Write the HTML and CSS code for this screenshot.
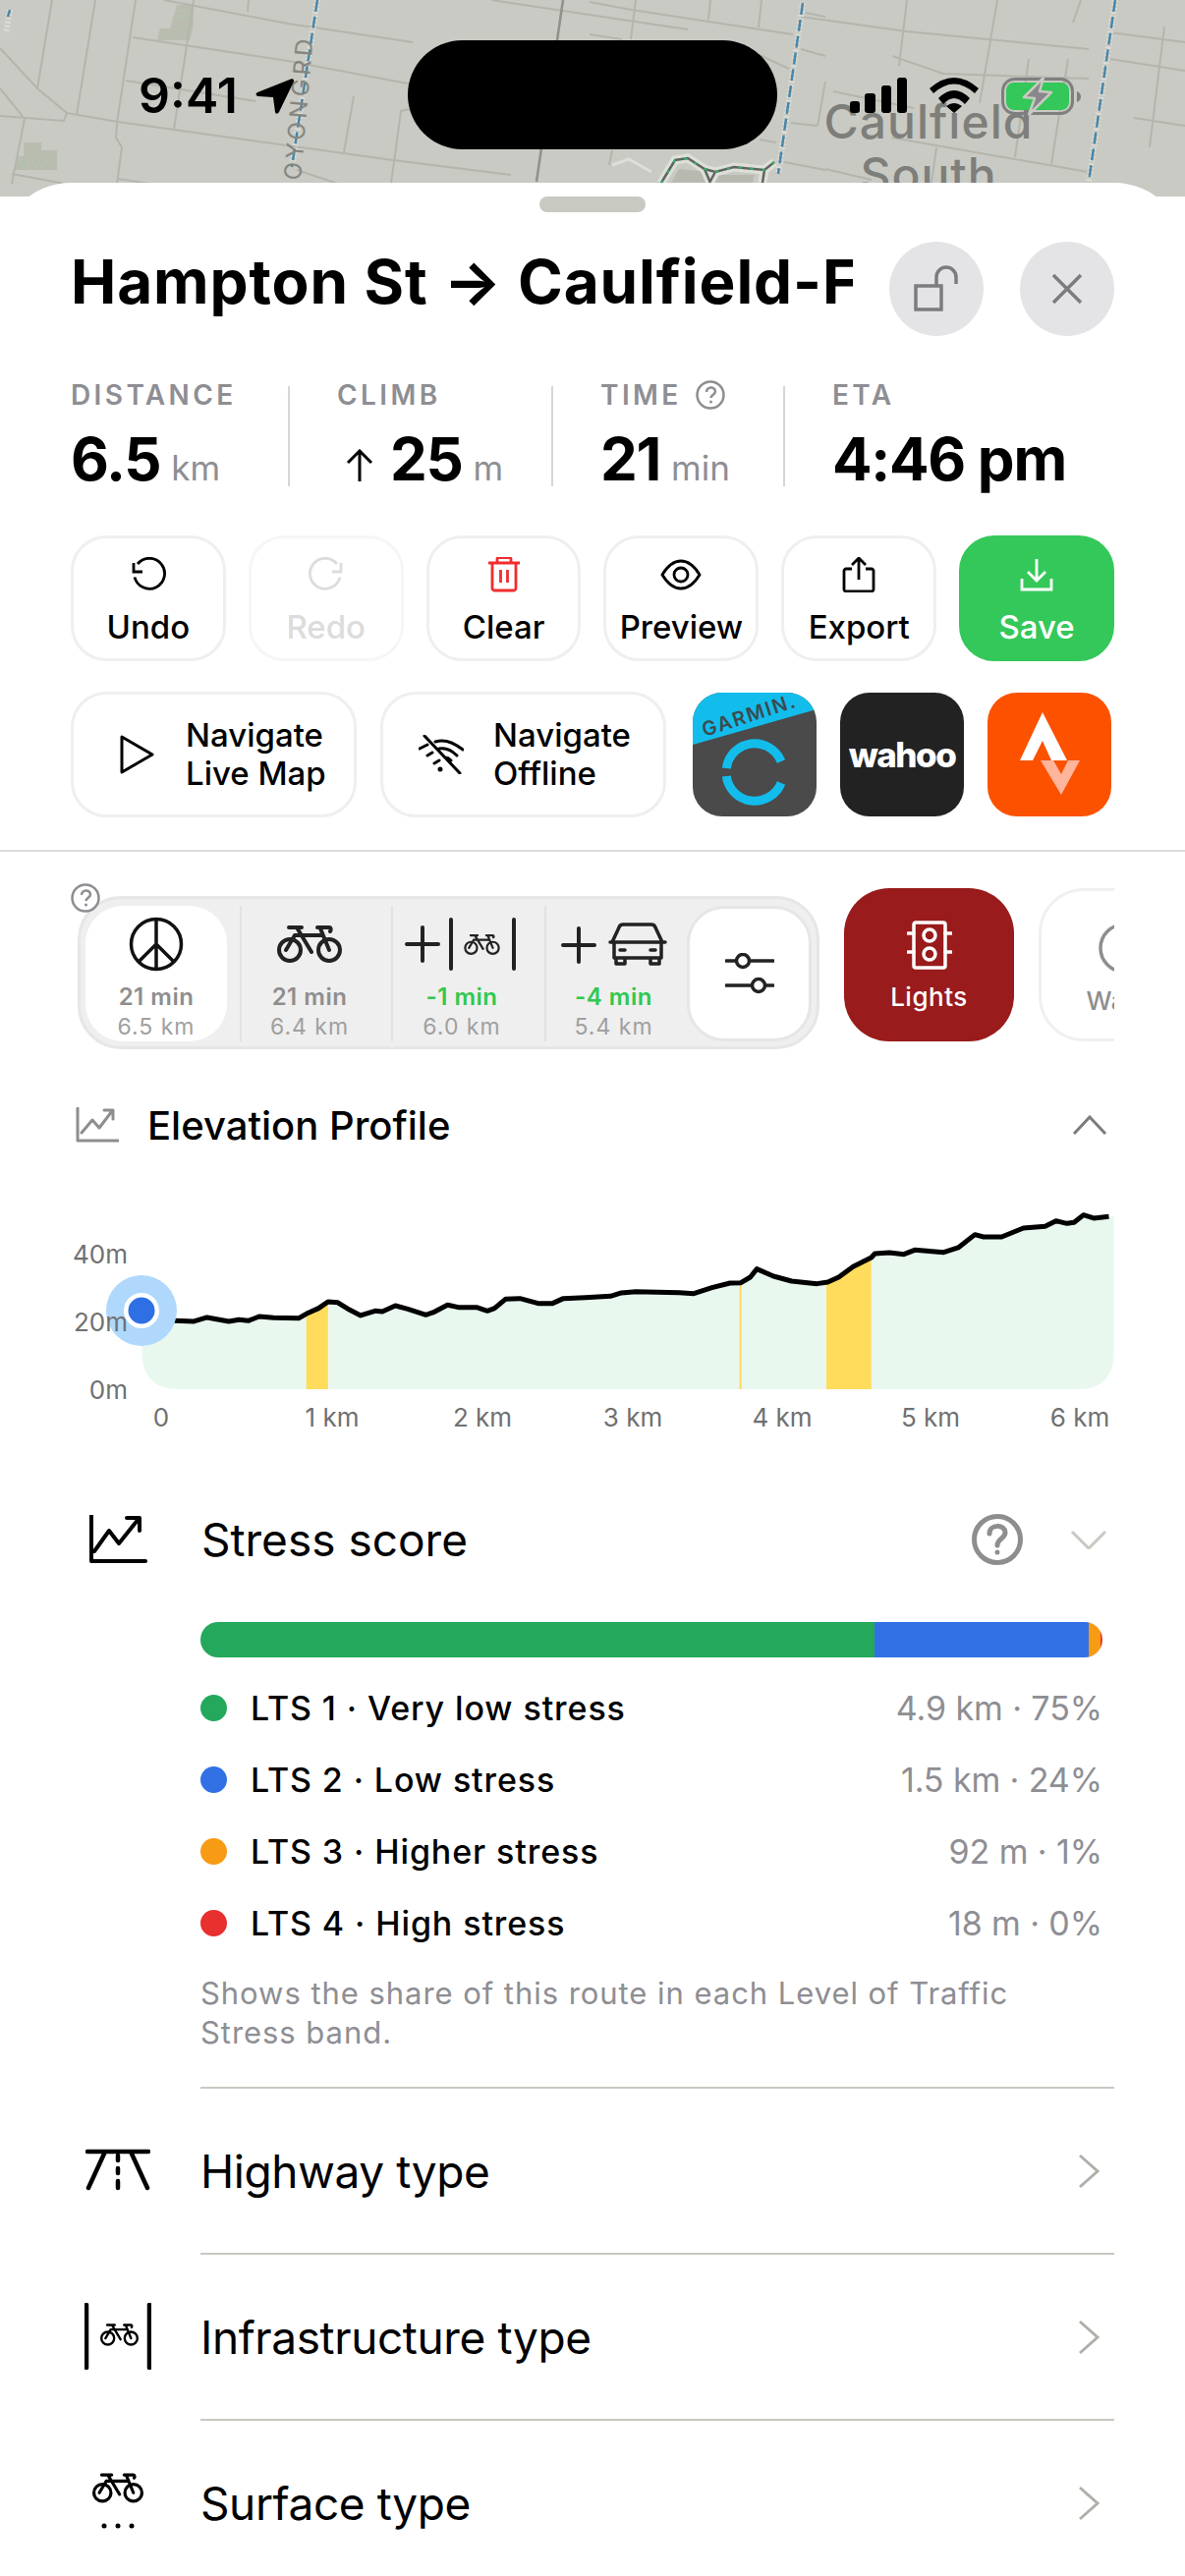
FILE: index.html

```html
<!DOCTYPE html>
<html lang="en">
<head>
  <meta charset="UTF-8" />
  <meta name="viewport" content="width=device-width, initial-scale=1.0" />
  <title>Route planner</title>
  <link rel="stylesheet" href="styles.css">
</head>
<body>
  <svg width="0" height="0" class="defs">
    <symbol id="bike" viewBox="0 0 66 38">
      <g fill="none" stroke="currentColor" stroke-width="4" stroke-linecap="round" stroke-linejoin="round">
        <circle cx="13" cy="25" r="11" />
        <circle cx="53" cy="25" r="11" />
        <path d="M12 2h13M20 2l15 25M18 10h27M9 25l9-15M41 2h12c2 0 2 3 1 4M44 3l9 22" />
      </g>
    </symbol>
  </svg>

  <div class="map">
    <svg viewBox="0 0 1206 200" width="1206" height="200">
      <rect width="1206" height="200" fill="#c9cac3" />
      <path class="patch" d="M180 5h17v20l-4 16h-33l3-12h10zM24 145h18v8h16v20H14l3-14h7z" />
      <path class="patch-dots" d="M182 10v12M187 10v12M20 165h30M22 170h26" />
      <g class="street">
        <path d="M167 0L293 24L420 43M500 0L700 30" />
        <path d="M97 0L78 117M53 0L38 90M138 0L119 125L118 140L124 150L119 187M197 0L177 132M253 0L252 12" />
        <path d="M0 49L38 90L68 115M0 90L25 121M0 118L65 123L68 115M25 121L12 187" />
        <path d="M68 115L120 124L177 132L400 163L520 178M135 38L293 62L420 86L500 100" />
        <path d="M128 82L260 103M360 98L350 155M420 110L408 113L398 187M12 177L83 190M120 182L173 190M302 173L353 190" />
        <path d="M600 2L643 10L807 35M647 0L642 40M723 0L721 20M775 0L772 28M600 35L633 40" />
        <path d="M743 42L803 70M820 13L840 17M815 50L840 57M840 83L832 128M805 125L832 128M798 165L840 173M773 142L790 145M623 153L620 168" />
        <path d="M815 17L923 32L1108 50M1130 33L1206 43M908 57L960 75L1108 80M1130 60L1206 72M1154 120L1206 128" />
        <path d="M923 0L915 67M1015 0L997 105M1100 0L1092 23M1185 27L1170 150M1047 60L1033 160M1087 60L1070 167" />
        <path d="M848 93L930 110M907 140L1107 175M953 150L948 186M840 172L887 183" />
      </g>
      <path class="road-dark" d="M573 0L546 185" />
      <path class="park-pale" d="M623 168L640 162L663 175" />
      <path class="park-patch" d="M683 186l8-14 22 2 8 12zM728 186l4-8 36 0-2 8z" />
      <path class="park" d="M673 186L687 163L700 161L717 172L728 175L747 170L778 173L788 165M717 172L723 186M728 175L722 186M778 173L776 186" />
      <path class="park-line" d="M673 186L687 163L700 161L717 172L728 175L747 170L778 173L788 165M717 172L723 186M728 175L722 186M778 173L776 186" />
      <path class="park-green" d="M673 186L687 163L700 161L717 172L728 175L747 170L778 173L788 165" />
      <path class="road-halo" d="M817 3L792 177M1135 0L1108 185M323 0L297 170M10 10L6 34" />
      <path class="road-blue" d="M817 3L792 177M1135 0L1108 185M323 0L297 170M10 10L8 17" />
    </svg>
    <span class="road-name">OYONGRD</span>
    <span class="suburb">Caulfield<br>South</span>
  </div>

  <div class="statusbar">
    <span class="clock">9:41</span>
    <svg class="locate" viewBox="0 0 40 38" width="40" height="38"><path d="M36 2.500c2-1 3.500.5 3 2.500L24 36c-1.500 2.500-3.500 2-4 0l-2-15L3 20c-3-.5-3-3-1-4z" /></svg>
    <div class="island"></div>
    <div class="status-icons">
      <svg viewBox="0 0 58 36" width="58" height="36"><rect x="0" y="24" width="10" height="12" rx="3" /><rect x="15" y="16" width="11" height="20" rx="3" /><rect x="32" y="8" width="10" height="28" rx="3" /><rect x="48" y="0" width="10" height="36" rx="3" /></svg>
      <svg viewBox="0 0 50 36" width="50" height="36"><path d="M0 11Q25-11 50 11L46 16Q25-3 4 16ZM9 21Q25 5 41 21L36 27Q25 15 14 27ZM17 29Q25 23 33 29L25 36Z" /></svg>
      <svg viewBox="0 0 82 38" width="82" height="38">
        <rect x="1.500" y="1.500" width="71" height="35" rx="12" fill="none" stroke="#7f7f7f" stroke-width="3" />
        <rect x="5" y="5" width="64" height="28" rx="8" fill="#34c759" />
        <path d="M77 14c3 1 4 3 4 5.500s-1 4.500-4 5.500z" fill="#7f7f7f" />
        <path d="M43 0L23 20l11 1L28 38 51 15 39 14z" fill="#88888c" stroke="#c9cac3" stroke-width="2.500" stroke-linejoin="round" />
      </svg>
    </div>
  </div>

  <main class="sheet">
    <div class="handle"></div>

    <header class="sheet-head">
      <h1 class="route-title">Hampton St → Caulfield-F</h1>
      <button class="round-btn">
        <svg viewBox="0 0 48 48" width="48" height="48"><path d="M3 21h26v24H3zM24 21v-9a10 10 0 0 1 20 0v7" /></svg>
      </button>
      <button class="round-btn">
        <svg viewBox="0 0 32 32" width="32" height="32"><path d="M2 2l28 28M30 2L2 30" /></svg>
      </button>
    </header>

    <section class="stats">
      <div class="stat stat-distance">
        <div class="stat-label">DISTANCE</div>
        <div class="stat-value"><span>6.5</span><small>km</small></div>
      </div>
      <div class="stat stat-climb">
        <div class="stat-label">CLIMB</div>
        <div class="stat-value">
          <svg class="climb-arrow" viewBox="0 0 28 34" width="28" height="34"><path d="M14 33V2M2 14L14 2l12 12" /></svg>
          <span>25</span><small>m</small>
        </div>
      </div>
      <div class="stat stat-time">
        <div class="stat-label">TIME
          <svg class="help-small" viewBox="0 0 30 30" width="30" height="30"><circle cx="15" cy="15" r="13.500" /><path d="M11 12c0-6 9-6 9-.5 0 3-4.500 3.500-4.500 6.500" /><circle class="help-dot" cx="15.500" cy="22" r="1.500" /></svg>
        </div>
        <div class="stat-value"><span>21</span><small>min</small></div>
      </div>
      <div class="stat stat-eta">
        <div class="stat-label">ETA</div>
        <div class="stat-value"><span>4:46 pm</span></div>
      </div>
    </section>

    <section class="actions">
      <button class="action">
        <svg viewBox="0 0 36 36" width="36" height="36"><path d="M7 7a15.500 15.500 0 1 1-3 13.500M3 6v9h9" /></svg>
        Undo
      </button>
      <button class="action action-off">
        <svg viewBox="0 0 36 36" width="36" height="36"><path d="M29 7a15.500 15.500 0 1 0 3 13.500M33 6v9h-9" /></svg>
        Redo
      </button>
      <button class="action">
        <svg class="icon-red" viewBox="0 0 36 36" width="36" height="36"><path d="M2 6h32M6 6v26c0 1 1 2 2 2h20c1 0 2-1 2-2V6M11 6V2c0-1 1-1.500 2-1.500h10c1 0 2 .5 2 1.500v4M14.500 13v13M21.500 13v13" /></svg>
        Clear
      </button>
      <button class="action">
        <svg viewBox="0 2 42 36" width="42" height="36"><path d="M2 20C8 10 14 6 21 6s13 4 19 14c-6 10-12 14-19 14S8 30 2 20z" /><circle cx="21" cy="20" r="7" /></svg>
        Preview
      </button>
      <button class="action">
        <svg viewBox="0 0 36 36" width="36" height="36"><path d="M11 12H5c-1 0-2 1-2 2v19c0 1 1 2 2 2h26c1 0 2-1 2-2V14c0-1-1-2-2-2h-6M18 23V1M11 8l7-7 7 7" /></svg>
        Export
      </button>
      <button class="action action-save">
        <svg viewBox="0 0 36 36" width="36" height="36"><path d="M18 2v22M9 15l9 9 9-9M3 22v11h30V22" /></svg>
        Save
      </button>
    </section>

    <section class="nav-row">
      <button class="nav-btn">
        <svg viewBox="0 0 36 42" width="36" height="42"><path d="M3 3v36l31-18z" /></svg>
        <span>Navigate<br>Live Map</span>
      </button>
      <button class="nav-btn nav-offline">
        <svg viewBox="0 0 46 40" width="46" height="40"><path d="M6 1l36 38M1 14l8-4M17 7c9-3 18 0 28 8M9 21l5-3M21 14c6-1 12 1 18 7M16 29l5-3M27 23c2 0 4 1 6 3" /><circle class="dot" cx="22" cy="35" r="2.500" /></svg>
        <span>Navigate<br>Offline</span>
      </button>
      <div class="app-icon app-garmin">
        <svg viewBox="0 0 126 126" width="126" height="126">
          <path d="M0 0h126v17L0 53z" fill="#12bdec" />
          <text x="12" y="45" transform="rotate(-18 12 45)" class="garmin-name">GARMIN.</text>
          <path class="garmin-ring" d="M34.300 77A29 29 0 0 1 90 70" />
          <path class="garmin-ring" d="M34.300 85A29 29 0 0 0 90 92" />
        </svg>
      </div>
      <div class="app-icon app-wahoo"><span>wahoo</span></div>
      <div class="app-icon app-strava">
        <svg viewBox="0 0 126 126" width="126" height="126">
          <path d="M56 20L33 69h13l10-20 9 20h16z" fill="#fff" />
          <path d="M54 69h13l8 14 7-14h12l-19 35z" fill="#ffb49c" />
        </svg>
      </div>
    </section>

    <hr class="rule">

    <section class="tray">
      <div class="mode-group">
        <svg class="help-tiny" viewBox="0 0 30 30" width="30" height="30"><circle cx="15" cy="15" r="13.500" /><path d="M11 12c0-6 9-6 9-.5 0 3-4.500 3.500-4.500 6.500" /><circle class="help-dot" cx="15.500" cy="22" r="1.500" /></svg>
        <div class="mode mode-on">
          <svg class="mode-icon" viewBox="0 0 56 56" width="56" height="56"><g class="peace"><circle cx="28" cy="28" r="25.500" /><path d="M28 2.500v51M28 28L10 46M28 28l18 18" /></g></svg>
          <b>21 min</b>
          <span>6.5 km</span>
        </div>
        <div class="mode mode-second">
          <svg class="mode-icon" viewBox="0 0 66 38" width="66" height="38"><use href="#bike" /></svg>
          <b>21 min</b>
          <span>6.4 km</span>
        </div>
        <div class="mode">
          <svg class="mode-icon" viewBox="0 0 116 54" width="116" height="54">
            <path class="glyph" d="M2 27h32M18 10v34M47 2v50M111 2v50" />
            <use href="#bike" x="60" y="17" width="37" height="21" />
          </svg>
          <b class="faster">-1 min</b>
          <span>6.0 km</span>
        </div>
        <div class="mode mode-last">
          <svg class="mode-icon" viewBox="0 0 108 44" width="108" height="44">
            <path class="glyph" d="M2 23h32M18 6v34" />
            <path class="glyph-thin" d="M52 20l7-15c.5-1.500 2-3 4-3h29c2 0 3.500 1.500 4 3l7 15M50 20h56M54 20v16h48V20M56 36v6h9v-6M91 36v6h9v-6M60 28h5M91 28h5" />
          </svg>
          <b class="faster">-4 min</b>
          <span>5.4 km</span>
        </div>
        <div class="filter-btn">
          <svg viewBox="0 0 50 42" width="50" height="42"><path d="M1 8h10M26 8h23M1 33h26M42 33h7" /><circle cx="18" cy="8" r="6.500" /><circle cx="34" cy="33" r="6.500" /></svg>
        </div>
      </div>
      <div class="chip chip-lights">
        <svg viewBox="0 0 46 50" width="46" height="50"><rect x="7" y="2" width="32" height="46" rx="2" /><circle cx="23" cy="15" r="6" /><circle cx="23" cy="34" r="6" /><path d="M1 13h6M39 13h6M1 32h6M39 32h6" /></svg>
        <span>Lights</span>
      </div>
      <div class="chip chip-water">
        <svg viewBox="0 0 52 52" width="52" height="52"><circle cx="26" cy="26" r="24" /></svg>
        <span>Water</span>
      </div>
    </section>

    <div class="section-head elevation-head">
      <svg class="section-icon" viewBox="0 0 44 36" width="44" height="36"><path d="M2 1v33h41M6 26l11-13 7 8 13-17M29 3h9v9" /></svg>
      <h2>Elevation Profile</h2>
      <svg class="chev" viewBox="0 0 36 20" width="36" height="20"><path d="M2 19L18 2l16 17" /></svg>
    </div>

    <svg class="chart" viewBox="0 1175 1206 295" width="1206" height="295">
      <g transform="translate(50 1100) scale(.7372 .3333)">
        <path class="chart-fill" d="M128 700L150 715L165 732L200 735L218 723L248 735L262 730L275 733L290 720L310 724L345 725L355 712L372 695L385 675L398 677L415 700L430 717L450 703L460 705L478 687L495 697L520 715L530 708L550 685L565 692L590 692L605 703L615 695L630 667L650 665L675 680L695 680L710 665L740 662L775 658L790 648L810 644L870 647L890 650L915 632L940 618L955 617L968 600L977 575L1000 597L1025 612L1060 620L1075 615L1090 600L1110 568L1135 540L1140 528L1160 525L1180 530L1195 517L1235 524L1255 510L1278 470L1290 477L1315 477L1345 450L1375 445L1390 428L1405 436L1415 433L1428 410L1442 420L1463 415L1470 415L1470 830Q1470 942 1420 942L180 942Q128 942 128 830Z" />
        <path class="chart-steep" d="M355 712L372 695L385 675L385 942L355 942ZM953 617L956 617L956 942L953 942ZM1073 616L1090 600L1110 568L1135 540L1135 942L1073 942Z" />
        <path class="chart-line" d="M150 715L165 732L200 735L218 723L248 735L262 730L275 733L290 720L310 724L345 725L355 712L372 695L385 675L398 677L415 700L430 717L450 703L460 705L478 687L495 697L520 715L530 708L550 685L565 692L590 692L605 703L615 695L630 667L650 665L675 680L695 680L710 665L740 662L775 658L790 648L810 644L870 647L890 650L915 632L940 618L955 617L968 600L977 575L1000 597L1025 612L1060 620L1075 615L1090 600L1110 568L1135 540L1140 528L1160 525L1180 530L1195 517L1235 524L1255 510L1278 470L1290 477L1315 477L1345 450L1375 445L1390 428L1405 436L1415 433L1428 410L1442 420L1463 415" />
      </g>
      <circle cx="144" cy="1334" r="36" fill="#afd8fc" />
      <g class="axis">
        <text x="130" y="1286" text-anchor="end">40m</text>
        <text x="130" y="1355" text-anchor="end">20m</text>
        <text x="130" y="1424" text-anchor="end">0m</text>
        <text x="164" y="1452" text-anchor="middle">0</text>
        <text x="338" y="1452" text-anchor="middle">1 km</text>
        <text x="491" y="1452" text-anchor="middle">2 km</text>
        <text x="644" y="1452" text-anchor="middle">3 km</text>
        <text x="796" y="1452" text-anchor="middle">4 km</text>
        <text x="947" y="1452" text-anchor="middle">5 km</text>
        <text x="1099" y="1452" text-anchor="middle">6 km</text>
      </g>
      <circle cx="144" cy="1334" r="18" fill="#fff" />
      <circle cx="144" cy="1334" r="13.500" fill="#2f6fe4" />
    </svg>

    <div class="section-head stress-head">
      <svg class="section-icon" viewBox="0 0 60 50" width="60" height="50"><path d="M3 1v46h55M6 37l15-21 10 13 20-25M39 3h13v13" /></svg>
      <h2>Stress score</h2>
      <svg class="help-big" viewBox="0 0 52 52" width="52" height="52"><circle cx="26" cy="26" r="23.500" /><path d="M18 20c0-10 16-10 16-1 0 6-8 6-8 13" /><circle class="help-dot" cx="26" cy="39" r="2.500" /></svg>
      <svg class="chev chev-light" viewBox="0 0 38 20" width="38" height="20"><path d="M2 2l17 17L36 2" /></svg>
    </div>

    <div class="stress-bar">
      <i class="band-1"></i><i class="band-2"></i><i class="band-3"></i><i class="band-4"></i>
    </div>

    <ul class="legend">
      <li><i class="band-1"></i><b>LTS 1 · Very low stress</b><span>4.9 km · 75%</span></li>
      <li><i class="band-2"></i><b>LTS 2 · Low stress</b><span>1.5 km · 24%</span></li>
      <li><i class="band-3"></i><b>LTS 3 · Higher stress</b><span>92 m · 1%</span></li>
      <li><i class="band-4"></i><b>LTS 4 · High stress</b><span>18 m · 0%</span></li>
    </ul>
    <p class="stress-note">Shows the share of this route in each Level of Traffic Stress band.</p>

    <div class="detail-row">
      <div class="detail-icon">
        <svg viewBox="0 0 66 44" width="66" height="44"><path d="M2 3h62M20 3L3 40M46 3l17 37M33 7v5M33 20v5M33 33v7" /></svg>
      </div>
      <div class="detail-body">
        <span>Highway type</span>
        <svg class="detail-chev" viewBox="0 0 24 36" width="24" height="36"><path d="M3 2l18 16L3 34" /></svg>
      </div>
    </div>
    <div class="detail-row">
      <div class="detail-icon">
        <svg viewBox="0 0 68 68" width="68" height="68"><path d="M2 2v64M66 2v64" /><use href="#bike" x="16" y="21" width="39" height="23" /></svg>
      </div>
      <div class="detail-body">
        <span>Infrastructure type</span>
        <svg class="detail-chev" viewBox="0 0 24 36" width="24" height="36"><path d="M3 2l18 16L3 34" /></svg>
      </div>
    </div>
    <div class="detail-row">
      <div class="detail-icon">
        <svg viewBox="0 0 54 60" width="54" height="60"><use href="#bike" x="1" y="0" width="52" height="31" /><circle class="dot" cx="13" cy="54" r="2.500" /><circle class="dot" cx="27" cy="54" r="2.500" /><circle class="dot" cx="41" cy="54" r="2.500" /></svg>
      </div>
      <div class="detail-body">
        <span>Surface type</span>
        <svg class="detail-chev" viewBox="0 0 24 36" width="24" height="36"><path d="M3 2l18 16L3 34" /></svg>
      </div>
    </div>
  </main>
</body>
</html>
```

FILE: styles.css

```css
* {
  box-sizing: border-box;
}
html, body {
  margin: 0;
  width: 1206px;
  height: 2622px;
  overflow: hidden;
}
body {
  position: relative;
  font-family: Inter, "Noto Sans", sans-serif;
  color: #000;
  background: #fff;
}
button {
  font-family: inherit;
  color: inherit;
  background: none;
  border: none;
  padding: 0;
}
.defs {
  position: absolute;
}

/* map behind the sheet */
.map {
  position: absolute;
  top: 0;
  left: 0;
  width: 1206px;
  height: 200px;
  overflow: hidden;
}
.map svg {
  display: block;
}
.patch {
  fill: #b9bdb0;
}
.patch-dots {
  fill: none;
  stroke: #9fd3b0;
  stroke-width: 1.500;
  stroke-dasharray: 1.500 5;
}
.street path {
  fill: none;
  stroke: #b4b5ad;
  stroke-width: 2;
}
.road-dark {
  fill: none;
  stroke: #8f918a;
  stroke-width: 2.500;
}
.road-halo {
  fill: none;
  stroke: #dcdcd6;
  stroke-width: 6;
  stroke-dasharray: 2 2;
}
.road-blue {
  fill: none;
  stroke: #4a87a8;
  stroke-width: 2.500;
  stroke-dasharray: 12 5;
}
.park-pale {
  fill: none;
  stroke: #dedfd9;
  stroke-width: 3;
}
.park-patch {
  fill: #b8bab2;
}
.park {
  fill: none;
  stroke: #dedfd9;
  stroke-width: 9;
}
.park-line {
  fill: none;
  stroke: #5f6661;
  stroke-width: 2.500;
}
.park-green {
  fill: none;
  stroke: #2fb56a;
  stroke-width: 2;
  stroke-dasharray: 3 9;
}
.road-name {
  position: absolute;
  left: 184px;
  top: 95px;
  width: 240px;
  text-align: center;
  font-size: 24px;
  letter-spacing: 4px;
  color: #85867f;
  transform: rotate(-85deg);
  white-space: nowrap;
}
.suburb {
  position: absolute;
  left: 800px;
  top: 97px;
  width: 290px;
  text-align: center;
  font-size: 48px;
  font-weight: 500;
  line-height: 54px;
  letter-spacing: 1px;
  color: #7e7e7b;
}

/* status bar */
.statusbar {
  position: absolute;
  top: 41px;
  left: 0;
  width: 1206px;
  height: 111px;
  display: flex;
  align-items: center;
  padding-left: 141px;
}
.clock {
  width: 119px;
  font-size: 50px;
  font-weight: 600;
}
.locate {
  fill: #000;
}
.island {
  position: absolute;
  left: 415px;
  top: 0;
  width: 376px;
  height: 111px;
  border-radius: 56px;
  background: #000;
}
.status-icons {
  position: absolute;
  left: 865px;
  top: 38px;
  display: flex;
  align-items: flex-start;
  gap: 23px;
}

/* bottom sheet */
.sheet {
  position: absolute;
  top: 186px;
  left: 0;
  width: 1206px;
  height: 2436px;
  background: #fff;
  border-radius: 72px 72px 0 0;
  overflow: hidden;
}
.handle {
  width: 108px;
  height: 16px;
  margin: 14px auto 0;
  border-radius: 8px;
  background: #c8c9c1;
}
.sheet-head {
  display: flex;
  align-items: center;
  height: 96px;
  margin-top: 30px;
  padding: 0 72px;
}
.route-title {
  flex: 1;
  margin: 0 0 16px;
  font-size: 62px;
  font-weight: 700;
  letter-spacing: .9px;
  white-space: nowrap;
  overflow: hidden;
}
.round-btn {
  width: 96px;
  height: 96px;
  margin-left: 37px;
  border-radius: 50%;
  background: #e4e4e6;
  display: flex;
  align-items: center;
  justify-content: center;
}
.round-btn svg {
  fill: none;
  stroke: #7c7c80;
  stroke-width: 3.5;
}

.stats {
  display: flex;
  height: 102px;
  margin-top: 51px;
  padding-left: 72px;
}
.stat {
  padding-left: 48px;
  border-right: 2px solid #d6d6d6;
}
.stat-distance {
  width: 223px;
  padding-left: 0;
}
.stat-climb {
  width: 268px;
}
.stat-time {
  width: 236px;
}
.stat-eta {
  border-right: none;
  padding-left: 48px;
}
.stat-label {
  display: flex;
  align-items: center;
  gap: 14px;
  height: 30px;
  margin-top: -6px;
  font-size: 28px;
  font-weight: 600;
  letter-spacing: 3.4px;
  color: #8e8e93;
}
.stat-value {
  display: flex;
  align-items: baseline;
  gap: 11px;
  margin-top: 19px;
  font-size: 60px;
  font-weight: 700;
  line-height: 62px;
  letter-spacing: -1.300px;
  white-space: nowrap;
}
.stat-value small {
  font-size: 35px;
  font-weight: 400;
  letter-spacing: 0;
  color: #8e8e93;
}
.climb-arrow {
  align-self: center;
  margin: 4px 6px 0 9px;
  fill: none;
  stroke: #000;
  stroke-width: 3;
}
.help-small, .help-tiny {
  fill: none;
  stroke: #8e8e93;
  stroke-width: 2.500;
}
.help-dot {
  fill: #8e8e93;
  stroke: none;
}

.actions {
  display: grid;
  grid-template-columns: repeat(6, 1fr);
  gap: 23px;
  height: 128px;
  margin: 50px 72px 0;
}
.action {
  display: flex;
  flex-direction: column;
  align-items: center;
  gap: 15px;
  padding-top: 19px;
  border: 3px solid #efefef;
  border-radius: 36px;
  font-size: 33px;
  font-weight: 500;
}
.action svg {
  fill: none;
  stroke: #000;
  stroke-width: 2.800;
}
.action svg.icon-red {
  stroke: #f02d2d;
}
.action-off {
  color: #dcdcdc;
  border-color: #f6f6f6;
}
.action-off svg {
  stroke: #dcdcdc;
}
.action-save {
  color: #fff;
  background: #34c85a;
  border-color: #34c85a;
}
.action-save svg {
  stroke: #fff;
}

.nav-row {
  display: flex;
  align-items: center;
  height: 128px;
  margin: 31px 72px 0;
}
.nav-btn {
  display: flex;
  align-items: center;
  width: 291px;
  height: 128px;
  padding-left: 46px;
  gap: 32px;
  border: 3px solid #efefef;
  border-radius: 36px;
  font-size: 33px;
  font-weight: 500;
  line-height: 39px;
  text-align: left;
}
.nav-btn svg {
  flex-shrink: 0;
  fill: none;
  stroke: #000;
  stroke-width: 3;
  stroke-linejoin: round;
  stroke-linecap: round;
}
.nav-btn .dot {
  fill: #000;
  stroke: none;
}
.nav-offline {
  margin-left: 24px;
  padding-left: 36px;
  gap: 30px;
}
.app-icon {
  width: 126px;
  height: 126px;
  margin-left: 24px;
  border-radius: 30px;
  overflow: hidden;
}
.app-icon svg {
  display: block;
}
.app-garmin {
  margin-left: 27px;
  background: #4a4a4a;
}
.garmin-name {
  font-size: 20px;
  font-weight: 600;
  letter-spacing: 1.800px;
  fill: #3d4a50;
}
.garmin-ring {
  fill: none;
  stroke: #12bdec;
  stroke-width: 9;
}
.app-wahoo {
  display: flex;
  align-items: center;
  justify-content: center;
  background: #222;
  color: #fff;
  font-size: 35px;
  font-weight: 800;
  letter-spacing: -1.500px;
}
.app-strava {
  background: #fc5200;
}

.rule {
  height: 2px;
  margin: 33px 0 0;
  border: none;
  background: #dcdcdc;
}

/* riding modes and chips */
.tray {
  display: flex;
  align-items: flex-start;
  gap: 25px;
  width: 1134px;
  height: 173px;
  margin-top: 28px;
  padding: 9px 0 0 72px;
  overflow: hidden;
}
.mode-group {
  position: relative;
  flex-shrink: 0;
  display: flex;
  width: 755px;
  height: 156px;
  margin: 8px 0 0 7px;
  padding: 7px 5px 5px;
  border: 3px solid #e6e6e6;
  border-radius: 44px;
  background: #efefef;
}
.help-tiny {
  position: absolute;
  top: -16px;
  left: -10px;
}
.mode {
  display: flex;
  flex-direction: column;
  align-items: center;
  width: 156px;
  height: 138px;
  padding-right: 14px;
  border-right: 2px solid #e2e2e2;
  font-size: 24px;
}
.mode-on {
  width: 144px;
  margin-right: 13px;
  padding-right: 0;
  border-right: none;
  border-radius: 38px;
  background: #fff;
}
.mode-second {
  border-left: 2px solid #e2e2e2;
}
.mode-last {
  width: 143px;
  padding-right: 6px;
  border-right: none;
}
.mode-icon {
  display: block;
  height: 62px;
  margin-top: 8px;
  flex-shrink: 0;
}
.mode b {
  margin-top: 8px;
  font-weight: 600;
  line-height: 30px;
  letter-spacing: .5px;
  color: #8e8e8e;
}
.mode b.faster {
  color: #30c850;
}
.mode span {
  font-size: 23px;
  line-height: 30px;
  letter-spacing: 1px;
  color: #a0a0a0;
}
.peace {
  fill: none;
  stroke: #111;
  stroke-width: 3.500;
}
.mode use {
  color: #222;
}
.glyph {
  fill: none;
  stroke: #222;
  stroke-width: 4;
  stroke-linecap: round;
}
.glyph-thin {
  fill: none;
  stroke: #222;
  stroke-width: 3.500;
  stroke-linecap: round;
  stroke-linejoin: round;
}
.filter-btn {
  display: flex;
  align-items: center;
  justify-content: center;
  flex-shrink: 0;
  width: 127px;
  height: 138px;
  border: 3px solid #e6e6e6;
  border-radius: 38px;
  background: #fff;
}
.filter-btn svg {
  fill: none;
  stroke: #222;
  stroke-width: 3.500;
  stroke-linecap: round;
}
.chip {
  flex-shrink: 0;
  display: flex;
  flex-direction: column;
  align-items: center;
  width: 173px;
  height: 156px;
  padding-top: 33px;
  border-radius: 46px;
  font-size: 26px;
  font-weight: 500;
  letter-spacing: .5px;
}
.chip span {
  margin-top: 12px;
}
.chip-lights {
  color: #fff;
  background: #991b1b;
}
.chip-lights svg {
  fill: none;
  stroke: #fff;
  stroke-width: 3.500;
  stroke-linecap: round;
}
.chip-water {
  color: #8e8e8e;
  border: 3px solid #f0f0f0;
  padding-top: 32px;
}
.chip-water svg {
  fill: none;
  stroke: #8e8e8e;
  stroke-width: 3.500;
}

/* collapsible sections */
.section-head {
  display: flex;
  align-items: center;
  height: 60px;
  padding-right: 79px;
}
.section-head h2 {
  flex: 1;
  margin: 0;
  font-weight: 500;
  white-space: nowrap;
}
.section-icon {
  fill: none;
  stroke-linecap: round;
  stroke-linejoin: round;
}
.chev {
  fill: none;
  stroke: #7c7c80;
  stroke-width: 3;
}
.chev-light {
  stroke: #c8c9c1;
}
.elevation-head {
  margin-top: 47px;
  padding-left: 77px;
}
.elevation-head h2 {
  margin-left: 29px;
  font-size: 40px;
}
.elevation-head .section-icon {
  stroke: #8e8e8e;
  stroke-width: 3;
}
.chart {
  display: block;
}
.chart-fill {
  fill: #e9f8ef;
}
.chart-steep {
  fill: #ffdc5c;
}
.chart-line {
  fill: none;
  stroke: #000;
  stroke-width: 5;
  stroke-linejoin: round;
  vector-effect: non-scaling-stroke;
}
.axis text {
  font-size: 26px;
  fill: #707070;
}
.stress-head {
  margin-top: 67px;
  padding-left: 90px;
}
.stress-head .section-icon {
  stroke: #000;
  stroke-width: 4;
}
.stress-head h2 {
  margin-left: 55px;
  font-size: 46px;
  font-weight: 400;
}
.help-big {
  margin-right: 48px;
  fill: none;
  stroke: #8e8e8e;
  stroke-width: 5;
  stroke-linecap: round;
}
.stress-bar {
  display: flex;
  width: 918px;
  height: 36px;
  margin: 54px 0 0 204px;
  border-radius: 18px;
  overflow: hidden;
}
.stress-bar i {
  display: block;
}
.stress-bar .band-1 {
  width: 686px;
}
.stress-bar .band-2 {
  width: 218px;
}
.stress-bar .band-3 {
  width: 12px;
}
.stress-bar .band-4 {
  width: 2px;
}
.band-1 {
  background: #23a85c;
}
.band-2 {
  background: #3171e5;
}
.band-3 {
  background: #f79a14;
}
.band-4 {
  background: #e8302f;
}
.legend {
  width: 918px;
  margin: 15px 0 0 204px;
  padding: 0;
  list-style: none;
}
.legend li {
  display: flex;
  align-items: center;
  height: 73px;
  font-size: 34px;
}
.legend i {
  width: 27px;
  height: 27px;
  border-radius: 50%;
}
.legend b {
  flex: 1;
  margin-left: 24px;
  font-weight: 500;
  letter-spacing: .9px;
}
.legend span {
  letter-spacing: -.1px;
  color: #8e8e93;
}
.stress-note {
  width: 880px;
  margin: 15px 0 0 204px;
  font-size: 31px;
  line-height: 40px;
  letter-spacing: .95px;
  color: #8e8e93;
}
.detail-row {
  display: flex;
  height: 169px;
}
.stress-note + .detail-row {
  margin-top: 35px;
}
.detail-icon {
  display: flex;
  align-items: center;
  justify-content: center;
  width: 204px;
  padding-left: 36px;
}
.detail-icon svg {
  flex-shrink: 0;
  fill: none;
  stroke: #000;
  stroke-width: 4.500;
  stroke-linecap: round;
  color: #000;
}
.detail-icon .dot {
  fill: #000;
  stroke: none;
}
.detail-body {
  flex: 1;
  display: flex;
  align-items: center;
  justify-content: space-between;
  margin-right: 72px;
  padding: 0 14px 0 0;
  border-top: 2px solid #c8c9c1;
  font-size: 46px;
  letter-spacing: -.4px;
}
.detail-chev {
  fill: none;
  stroke: #b0b0aa;
  stroke-width: 3;
}
```
